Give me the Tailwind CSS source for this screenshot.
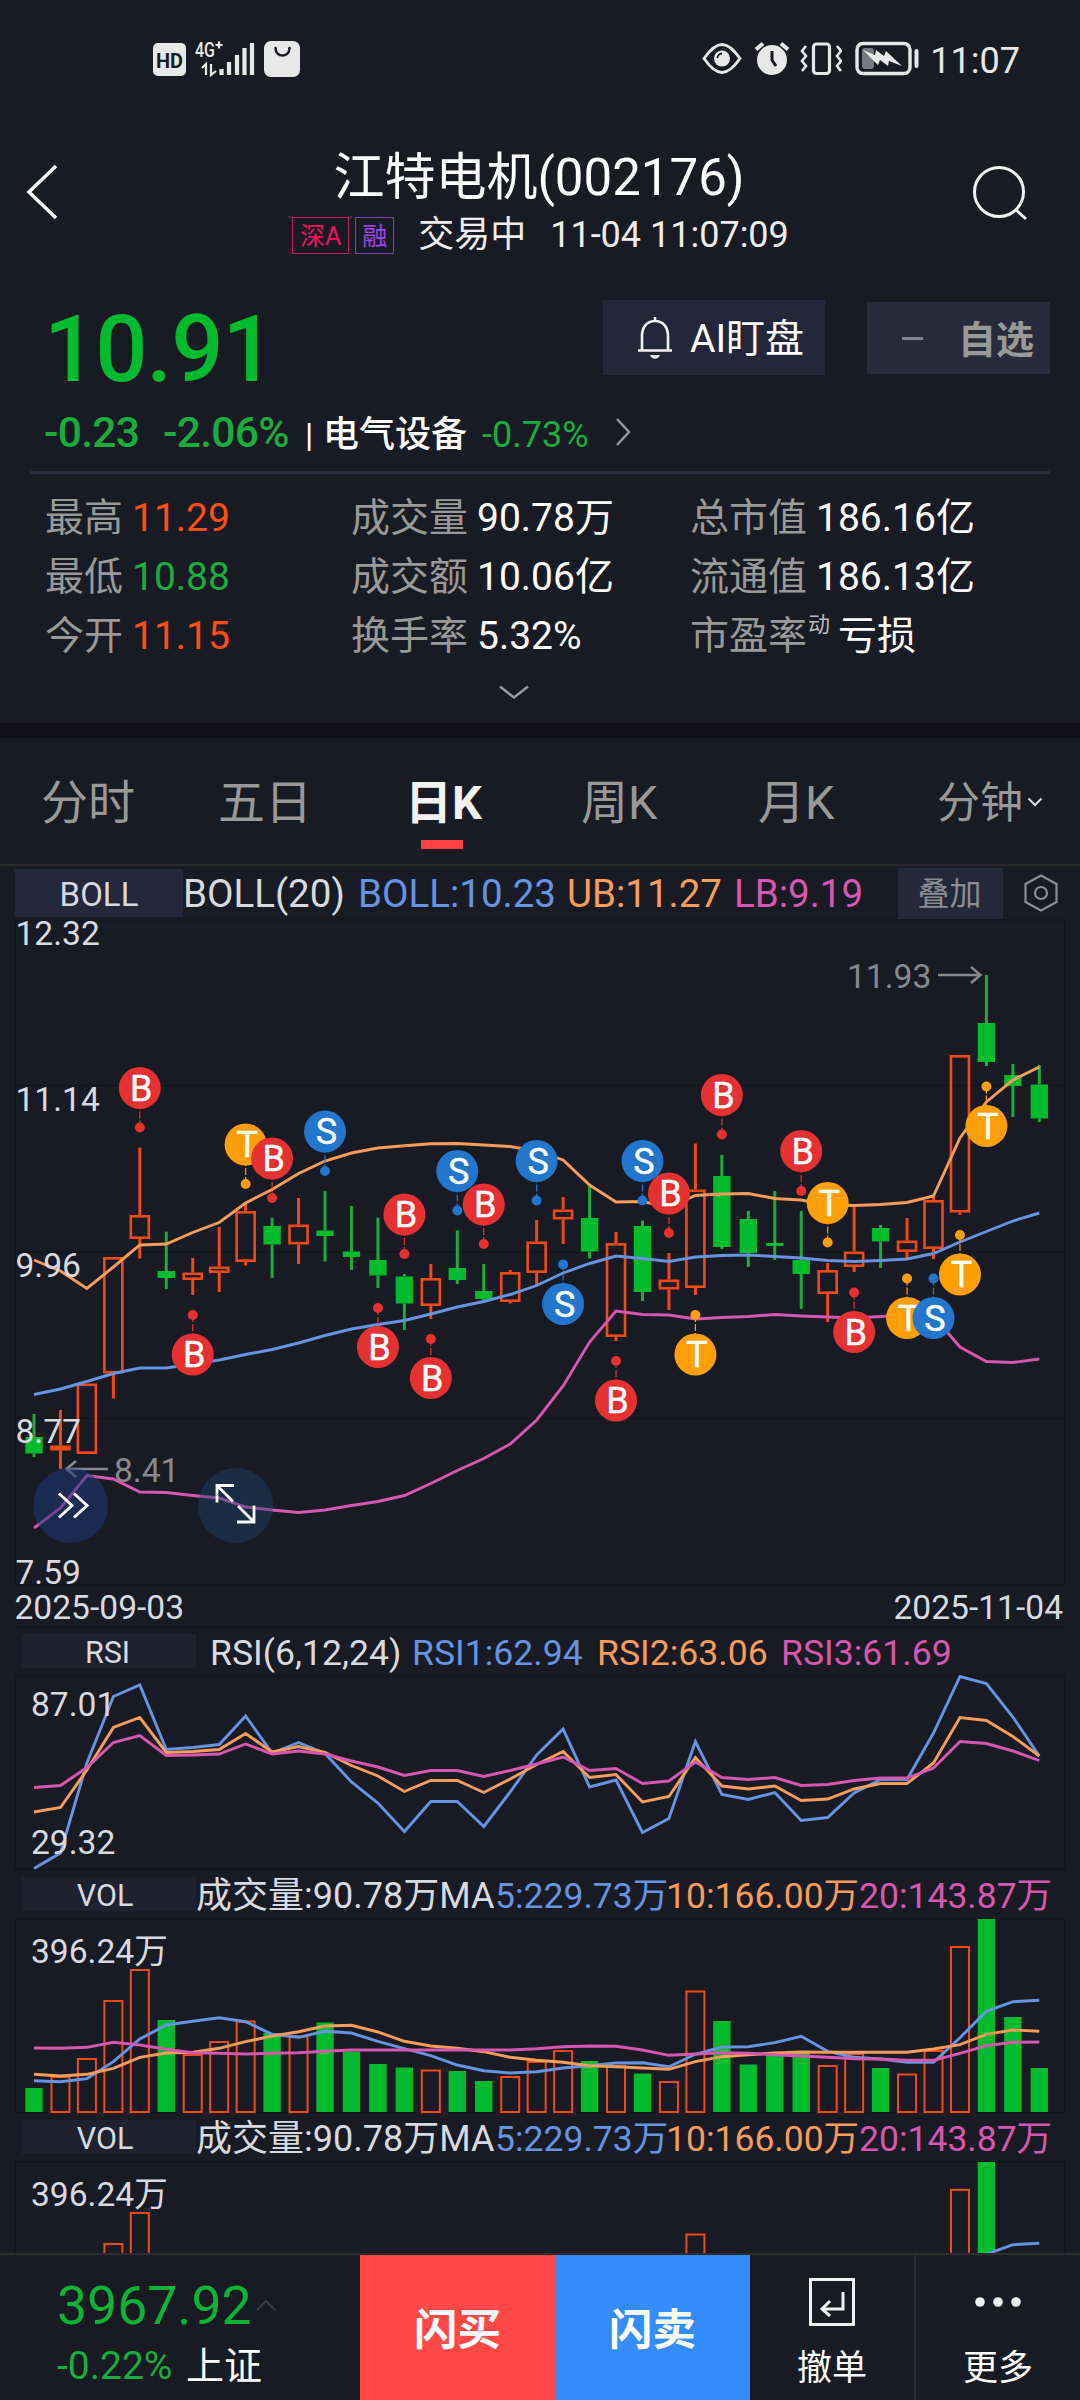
<!DOCTYPE html>
<html lang="zh-CN">
<head>
  <meta charset="UTF-8" />
  <meta name="viewport" content="width=device-width, initial-scale=1.0" />
  <title>江特电机(002176)</title>
  <script src="https://cdn.jsdelivr.net/npm/@tailwindcss/browser@4"></script>
</head>
<body class="bg-[#191b24]">
<div class="w-[1080px] h-[2400px] overflow-hidden flex flex-col bg-[#191b24] text-white whitespace-nowrap font-['Roboto','Noto_Sans_CJK_SC',sans-serif]">

  <!-- 状态栏 -->
  <div class="h-[120px] shrink-0 flex items-center justify-between pl-[153px] pr-[60px] text-[#e8e8e8]">
    <svg class="w-[148px] h-10 overflow-visible" viewBox="153 40 148 40" fill="currentColor">
      <rect x="153" y="43" width="33" height="33" rx="5" />
      <text x="169.500" y="67.500" font-size="21" font-weight="700" text-anchor="middle" textLength="27" lengthAdjust="spacingAndGlyphs" fill="#191b24">HD</text>
      <text x="195" y="57" font-size="20" font-weight="500" textLength="20" lengthAdjust="spacingAndGlyphs">4G</text>
      <path d="M215.500 45h7M219 41.500v7M206 75V64l-4 4M211 64v11l5-4" fill="none" stroke="currentColor" stroke-width="2.200" />
      <path d="M221.500 69v6M229 62v13M237 55v20M244.500 48v27M252 43v32" fill="none" stroke="currentColor" stroke-width="4.200" />
      <rect x="264" y="41" width="36" height="36" rx="7" />
      <path d="M275.500 48c0 10 14 10 14 0" fill="none" stroke="#191b24" stroke-width="2.500" stroke-linecap="round" />
    </svg>
    <div class="flex items-center">
      <svg class="w-[140px] h-10 mr-3" viewBox="703 40 140 40" fill="none" stroke="currentColor">
        <path d="M705 58.500c7-10 12-14 18-14s11 4 18 14c-7 10-12 14-18 14s-11-4-18-14z" stroke-width="3" />
        <circle cx="723" cy="58.500" r="8" fill="currentColor" stroke="none" />
        <path d="M718.500 58a4.500 4.500 0 0 1 4.500-4.500" stroke="#191b24" stroke-width="1.800" />
        <circle cx="773" cy="60" r="15" fill="currentColor" stroke="none" />
        <path d="M757 49.500l7-6M789 49.500l-7-6" stroke-width="4" />
        <path d="M773 51v9l4 6" stroke="#191b24" stroke-width="3" />
        <rect x="814.500" y="44" width="16" height="29.500" rx="3" stroke-width="3.200" />
        <path d="M807 46l-4 5 4 5-4 5 4 5-4 5M838 46l4 5-4 5 4 5-4 5 4 5" stroke-width="2.600" />
      </svg>
      <svg class="w-[66px] h-10 mr-2.5" viewBox="855 40 66 40" fill="none" stroke="currentColor">
        <rect x="858" y="43.500" width="53" height="30" rx="6" stroke-width="3.400" />
        <rect x="863" y="48" width="12" height="21" rx="3" fill="#777980" stroke="none" />
        <path d="M864 50l12 5 1-5 8 6 2-5 16 15-13-5-1 5-8-6-2 5z" fill="currentColor" stroke="none" />
        <path d="M917.500 51v15" stroke-width="4" stroke-linecap="round" />
      </svg>
      <span class="text-[36px] leading-none pt-px">11:07</span>
    </div>
  </div>

  <!-- 标题 -->
  <header class="h-[170px] shrink-0 flex justify-between">
    <svg class="w-[60px] h-16 mt-[40px] ml-[10px]" viewBox="10 160 60 64" fill="none" stroke="#fff" stroke-width="3.500">
      <path d="M56 166L29 192l27 26" />
    </svg>
    <div class="flex flex-col items-center pt-7 pl-[38px]">
      <h1 class="text-[51px] leading-[59px]">江特电机(002176)</h1>
      <div class="h-[42px] mt-[7px] ml-[3px] flex items-center text-[36px] text-[#eeeeee]">
        <span class="h-[37px] w-[57px] mr-1.5 border-[1.500px] border-[#c41a5e] text-[#f0105f] text-[25px] leading-[38px] text-center">深A</span>
        <span class="h-[37px] w-[39px] mr-[24px] border-[1.500px] border-[#7d46b8] text-[#a044f0] text-[25px] leading-[38px] text-center">融</span>
        <span class="mr-[24px]">交易中</span>
        <span>11-04 11:07:09</span>
      </div>
    </div>
    <svg class="w-[70px] h-[70px] mt-[37px] mr-[40px]" viewBox="970 157 70 70" fill="none" stroke="#f0f0f0" stroke-width="3">
      <circle cx="999" cy="192" r="24.500" /><path d="M1016 210l10 9" />
    </svg>
  </header>

  <!-- 报价 -->
  <section class="h-[433px] shrink-0 pl-[30px] pr-[30px]">
    <div class="h-[115px] flex">
      <div class="w-[573px] pl-[14px] pt-[10px] text-[92px] leading-[100px] tracking-[-1px] font-medium text-[#00bb2d]">10.91</div>
      <button class="w-[222px] h-[75px] mt-2.5 flex items-center pl-[34px] bg-[#242739] text-[39px]">
        <svg class="w-[36px] h-[44px] mr-[17px]" viewBox="636 315 36 44" fill="none" stroke="#f2f2f2" stroke-width="2.600">
          <path d="M641 349v-14c0-9 5-15 13-15s13 6 13 15v14M637 349.500h34M654 320v-4" /><path d="M649 354c2 5 8 5 10 0z" fill="#f2f2f2" stroke="none" />
        </svg>
        <span class="pt-1">AI盯盘</span>
      </button>
      <button class="w-[183px] h-[72px] mt-3 ml-auto flex items-center pl-[35px] bg-[#2a2b3a] text-[#999] text-[38px] font-bold">
        <span class="w-[21px] h-[3px] mr-[35px] bg-[#7c8499]"></span><span class="pt-1">自选</span>
      </button>
    </div>
    <div class="h-[54px] flex items-baseline pl-[14px] leading-[55px] text-[#18ad3c]">
      <span class="w-[119px] text-[42.500px] tracking-[-0.7px] font-medium">-0.23</span>
      <span class="w-[142px] text-[42.500px] tracking-[-0.7px] font-medium">-2.06%</span>
      <span class="w-[18px] text-[34px] text-white">|</span>
      <span class="w-[159px] text-[36px] font-medium text-white">电气设备</span>
      <span class="w-[131px] text-[36px]">-0.73%</span>
      <svg class="w-5 h-[30px] self-center" viewBox="0 0 20 30" fill="none" stroke="#999" stroke-width="2.500"><path d="M4 2l12 13L4 28" /></svg>
    </div>
    <div class="h-[3px] mt-3 bg-[#2a2b3b]"></div>
    <div class="mt-3.5 grid grid-cols-[306px_339px_1fr] auto-rows-[59px] pl-[15px] text-[39px] leading-[60px]">
      <div class="flex"><span class="w-[87px] text-[#999]">最高</span><span class="text-[#ff4d14]">11.29</span></div>
      <div class="flex"><span class="w-[126px] text-[#999]">成交量</span><span>90.78万</span></div>
      <div class="flex"><span class="w-[126px] text-[#999]">总市值</span><span>186.16亿</span></div>
      <div class="flex"><span class="w-[87px] text-[#999]">最低</span><span class="text-[#18ad3c]">10.88</span></div>
      <div class="flex"><span class="w-[126px] text-[#999]">成交额</span><span>10.06亿</span></div>
      <div class="flex"><span class="w-[126px] text-[#999]">流通值</span><span>186.13亿</span></div>
      <div class="flex"><span class="w-[87px] text-[#999]">今开</span><span class="text-[#ff4d14]">11.15</span></div>
      <div class="flex"><span class="w-[126px] text-[#999]">换手率</span><span>5.32%</span></div>
      <div class="flex"><span class="w-[118px] text-[#999]">市盈率</span><span class="w-[30px] text-[22px] leading-[38px] text-[#bbb]">动</span><span>亏损</span></div>
    </div>
    <svg class="w-[34px] h-[18px] mt-[18px] ml-[467px]" viewBox="0 0 34 18" fill="none" stroke="#999" stroke-width="2.500"><path d="M3 3.500L17 14.500l14-11" /></svg>
  </section>

  <div class="h-[15px] shrink-0 bg-[#111016]"></div>

  <!-- 周期 tabs -->
  <nav class="h-[128px] shrink-0 flex pl-[41px] pt-[32px] border-b-2 border-[#2a2a2c] text-[47px] leading-[66px] text-[#999]">
    <span class="w-[177px]">分时</span>
    <span class="w-[187px]">五日</span>
    <div class="w-[176px] flex flex-col font-bold text-[#f2f2f2]">
      <span>日K</span>
      <span class="w-[42px] h-[9px] mt-1 ml-4 bg-[#ff4040]"></span>
    </div>
    <span class="w-[177px]">周K</span>
    <span class="w-[179px]">月K</span>
    <div class="flex items-start text-[43px]">分钟
      <svg class="w-4 h-3 mt-[26px] ml-1" viewBox="0 0 16 12" fill="none" stroke="#ddd" stroke-width="2"><path d="M1.500 2.500L8 9l6.500-6.500" /></svg>
    </div>
  </nav>

  <!-- BOLL 指标栏 -->
  <div class="h-[54px] shrink-0 flex items-center pl-[15px] text-[38.500px] leading-[54px]">
    <span class="w-[168px] h-12 bg-[#25283a] text-center text-[33px] leading-[51px] text-[#d8dae2]">BOLL</span>
    <span class="w-[175px] pt-0.5 text-[#d8dae2]">BOLL(20)</span>
    <span class="w-[209px] pt-0.5 text-[#6693e2]">BOLL:10.23</span>
    <span class="w-[167px] pt-0.5 text-[#f89c5c]">UB:11.27</span>
    <span class="w-[164px] pt-0.5 text-[#d657b0]">LB:9.19</span>
    <span class="w-[105px] h-[51px] pr-0.5 bg-[#25283a] text-center text-[32px] leading-[52px] text-[#8b8d93]">叠加</span>
    <svg class="w-[38px] h-[40px] ml-[19px]" viewBox="0 0 38 40" fill="none" stroke="#8b8d93" stroke-width="2.200">
      <path d="M19 2.500L34.500 11v18L19 37.500 3.500 29V11z" /><circle cx="19" cy="20" r="6" />
    </svg>
  </div>

  <svg id="kline" class="w-[1080px] h-[707px] shrink-0 overflow-visible" viewBox="0 920 1080 707"></svg>

  <!-- RSI -->
  <div class="h-12 shrink-0 flex items-center pl-[22px] text-[35.600px] leading-[48px] text-[#d8dae2]">
    <span class="w-[174px] h-[34px] pr-[3px] bg-[#1f212f] text-center text-[30.500px] leading-[37px]">RSI</span>
    <span class="w-[202px] pl-[14px] pt-[3px]">RSI(6,12,24)</span>
    <span class="w-[185px] pl-[14px] pt-[3px] text-[#6693e2]">RSI1:62.94</span>
    <span class="w-[184px] pl-[14px] pt-[3px] text-[#f89c5c]">RSI2:63.06</span>
    <span class="pl-[14px] pt-[3px] text-[#d657b0]">RSI3:61.69</span>
  </div>
  <svg id="rsi" class="w-[1080px] h-[195px] shrink-0" viewBox="0 1675 1080 195"></svg>

  <!-- 成交量 -->
  <div class="h-12 shrink-0 flex items-center pl-[22px] text-[35.500px] leading-[48px] text-[#d8dae2]">
    <span class="w-[174px] h-[34px] pr-2 bg-[#1f212f] text-center text-[30.500px] leading-[37px]">VOL</span>
    <span class="w-[299px] pt-1 text-[36px]">成交量:90.78万MA</span>
    <span class="w-[171px] pt-1 text-[#6693e2]">5:229.73万</span>
    <span class="w-[193px] pt-1 text-[#f89c5c]">10:166.00万</span>
    <span class="pt-1 text-[#d657b0]">20:143.87万</span>
  </div>
  <svg id="vol1" class="w-[1080px] h-[195px] shrink-0" viewBox="0 1918 1080 195"></svg>
  <div class="h-12 shrink-0 flex items-center pl-[22px] text-[35.500px] leading-[48px] text-[#d8dae2]">
    <span class="w-[174px] h-[34px] pr-2 bg-[#1f212f] text-center text-[30.500px] leading-[37px]">VOL</span>
    <span class="w-[299px] pt-1 text-[36px]">成交量:90.78万MA</span>
    <span class="w-[171px] pt-1 text-[#6693e2]">5:229.73万</span>
    <span class="w-[193px] pt-1 text-[#f89c5c]">10:166.00万</span>
    <span class="pt-1 text-[#d657b0]">20:143.87万</span>
  </div>
  <svg id="vol2" class="w-[1080px] h-[92px] shrink-0" viewBox="0 1918 1080 92"></svg>

  <!-- 底部操作栏 -->
  <footer class="h-[147px] shrink-0 flex border-t-2 border-[#2d2d2f]">
    <div class="w-[360px] pl-[57px] pt-[18px]">
      <div class="flex text-[53.500px] leading-[66px] text-[#0db334]">3967.92
        <svg class="w-[22px] h-3 mt-[26px] ml-[3px]" viewBox="0 0 22 12" fill="none" stroke="#3a3b40" stroke-width="2"><path d="M2 11l9-9 9 9" /></svg>
      </div>
      <div class="flex mt-[5px] text-[39px] leading-[44px] text-[#18ad3c]"><span class="w-[129px]">-0.22%</span><span class="text-[38px] text-white">上证</span></div>
    </div>
    <button class="w-[195px] pt-1.5 bg-[#ff4848] text-[43.500px] font-bold">闪买</button>
    <button class="w-[195px] pt-1.5 bg-[#358cff] text-[43.500px] font-bold">闪卖</button>
    <button class="w-[164px] flex flex-col items-center pt-[22px] text-[35px] leading-[44px]">
      <svg class="w-[48px] h-[50px] mb-[20px]" viewBox="0 0 48 50" fill="none" stroke="#f0f0f0" stroke-width="3"><path d="M2.500 2.500h43v45h-43zM35 15v17H16M22 24l-8 8 8 7" /></svg>
      撤单
    </button>
    <button class="w-[166px] flex flex-col items-center pt-[22px] border-l-2 border-[#2d2d2f] text-[35px] leading-[44px]">
      <svg class="w-[48px] h-[50px] mb-[20px]" viewBox="0 0 48 50" fill="#f0f0f0"><circle cx="6" cy="25" r="4.800" /><circle cx="24" cy="25" r="4.800" /><circle cx="42" cy="25" r="4.800" /></svg>
      更多
    </button>
  </footer>
</div>

<script>
  const RED = '#f24a14', GREEN = '#00bb2d';
  const BLUE = '#6693e2', ORANGE = '#f89c5c', PINK = '#d657b0';
  const GRID = '#13141a', LABEL = '#d8dae2';
  const px = i => 34 + i * 26.456;

  // 类型, 最高, 实体上, 实体下, 最低
  const candles = [
    ['G',1414,1437,1453.5,1457],['R',1410,1445.5,1450.5,1469],['R',1383.5,1383.5,1454,1454],['R',1257,1257,1373.5,1398.5],
    ['R',1147.7,1215,1239,1258.5],['G',1231.7,1271,1278,1289],['R',1258,1272.5,1280,1295],['R',1227,1266.5,1273,1292],
    ['R',1203,1211,1262,1265.5],['G',1217.7,1226,1244.5,1278],['R',1198,1224.5,1244.5,1264],['G',1191,1230.5,1236,1261.5],
    ['G',1206,1251.5,1257,1270],['G',1217.7,1260,1275.5,1288],['G',1274,1276.5,1303.5,1330],['R',1264,1278,1306,1319],
    ['G',1230.5,1268,1280,1284],['G',1264,1291,1299,1301],['R',1270,1272,1302,1303.5],['R',1220,1241.5,1273,1285],
    ['R',1197,1209.5,1219.5,1244],['G',1184,1218,1251.5,1258.5],['R',1232,1243,1337,1341],['G',1220.5,1226,1292,1301],
    ['R',1253,1279.5,1289.5,1310],['R',1143.5,1189.5,1288,1295],['G',1155,1176,1247,1249],['G',1211,1219,1253,1267],
    ['G',1191,1243,1246,1260],['G',1211,1260,1274,1309],['R',1263,1270,1294,1322],['R',1207,1251.5,1267,1272],
    ['G',1225,1228,1241.5,1268],['R',1218,1240.5,1252,1258],['R',1197,1200,1249,1259],['R',1055,1055,1212.5,1215],
    ['G',975,1023,1062,1066],['G',1064,1075,1086,1117],['G',1065,1084.5,1118.5,1122]
  ];
  const ub = [1260,1271,1288.5,1267,1245,1244,1232.5,1222.5,1203,1189.5,1173.5,1161,1153,1148,1145.7,1143.8,1143.5,1145,1146.5,1151,1160,1185,1202,1201.5,1207,1195.5,1194,1193.5,1198.5,1200,1205,1205.5,1204.5,1202.5,1196,1138,1102,1080,1067];
  const mid = [1394.5,1389,1381.5,1373.5,1368,1368,1364,1360,1354.5,1349.5,1343,1335.5,1329,1324.5,1320.5,1314,1307,1301.5,1294.5,1285.5,1273,1263.5,1256,1258.5,1261.5,1257,1255.5,1255,1256.5,1258,1260.5,1261.5,1260.5,1259,1253.5,1242,1231.5,1221,1213];
  const lb = [1528,1508,1475.5,1479,1492,1492.5,1495.5,1498,1507,1510,1512.5,1510,1505.5,1501.5,1495.5,1483.5,1470.5,1458.5,1444,1420,1386,1342,1311,1314.5,1315,1319,1317.5,1316.5,1314.5,1316,1317,1318,1316.5,1315,1316,1347,1361.5,1362.5,1359];
  // 序号, 标记, 圆心, 小点
  const marks = [
    [4,'B',1088,1127.5],[6,'B',1354.5,1315],[8,'T',1144.5,1184],[9,'B',1158.5,1198],[11,'S',1131.5,1171],[13,'B',1347,1308],
    [14,'B',1214.5,1254],[15,'B',1378,1339],[16,'S',1171,1210.5],[17,'B',1204.5,1244],[19,'S',1161,1200.5],[20,'S',1304,1264.5],
    [22,'B',1400.5,1361],[23,'S',1161,1200.5],[24,'B',1193.5,1233],[25,'T',1354.5,1315],[26,'B',1095,1134.5],[29,'B',1151,1191],
    [30,'T',1203,1242.5],[31,'B',1332,1292.5],[33,'T',1318,1278.5],[34,'S',1318,1278.5],[35,'T',1274.5,1235],[36,'T',1126,1086.5]
  ];
  const markColor = { B: '#e53131', S: '#2277cc', T: '#ff9f05' };

  const rsi1 = [1868.5,1853,1763,1696.5,1685,1749.5,1747.5,1744.5,1716,1753,1742.5,1753.5,1782,1803,1831.5,1801.5,1801.5,1826.5,1792,1755,1729,1787,1780,1832.5,1818.5,1741.5,1794.5,1799.5,1792.5,1820.5,1817.5,1793,1779.5,1779.5,1733,1676.5,1683.5,1717,1756];
  const rsi2 = [1812,1807.5,1770,1727.5,1717.5,1752.5,1751.5,1749.5,1733.5,1752,1746.5,1752.5,1765.5,1776,1791.5,1780.5,1780.5,1792.5,1779,1764.5,1751.5,1777.5,1774.5,1802,1796.5,1757.5,1786,1789,1786,1800.5,1799,1789,1783.5,1783.5,1763,1717.5,1720.5,1736.5,1756];
  const rsi3 = [1787.5,1785.5,1767.5,1742.5,1735.5,1755.5,1755,1754,1744,1754,1751,1754,1761,1767,1775.5,1770.5,1770.5,1776.5,1770.5,1764,1757,1770.5,1768.5,1783.5,1781,1762,1777.5,1779.5,1777.5,1785.5,1784.5,1780.5,1778,1778,1768,1741.5,1743.5,1751,1760.5];

  const volTop = [2088,2076,2058,2000,1969,2020,2054,2041,2020.5,2033,2035.5,2022.5,2051.5,2064,2067.5,2069.5,2071,2081,2076,2061,2050,2061,2065,2073.5,2081,1990.5,2021,2064.5,2054,2051.5,2065,2053,2068,2073.5,2050,1946,1919,2017,2068];
  const v = a => a.map(n => 1870 + n / 3);
  const ma5 = v([632,635,626,575,507,465,454,443,455,493,502,484,489,514,536,557,585,602,609,605,594,587,579,578,590,553,531,530,518,499,544,562,567,577,577,503,424,395,391]);
  const ma10 = v([613,618,613,595,562,549,547,535,515,498,485,468,466,486,514,528,535,545,562,571,577,587,590,594,598,575,560,554,549,546,547,547,547,547,537,524,493,480,484]);
  const ma20 = v([534,535,532,517,525,538,548,550,552,550,548,544,540,540,540,540,540,540,540,536,530,528,529,540,556,552,548,550,554,558,562,566,567,571,571,550,527,517,516]);

  const line = (ys, color) => `<polyline fill="none" stroke="${color}" stroke-width="2.9" points="${ys.map((y, i) => px(i).toFixed(1) + ',' + y.toFixed(1)).join(' ')}" />`;
  const seg = (x1, y1, x2, y2, color, w) => `<line x1="${x1}" y1="${y1}" x2="${x2}" y2="${y2}" stroke="${color}" stroke-width="${w}" />`;
  const label = (x, y, t, color = LABEL, anchor = 'start') => `<text x="${x}" y="${y}" font-size="33.6" fill="${color}" text-anchor="${anchor}">${t}</text>`;
  const frame = (y1, y2) => seg(15.5, y1, 15.5, y2, GRID, 1) + seg(1064.5, y1, 1064.5, y2, GRID, 1);

  function body(i, type, top, bottom, w) {
    const x = px(i);
    if (type === 'G') return `<rect x="${x - 8.7}" y="${top}" width="17.4" height="${bottom - top}" fill="${GREEN}" />`;
    return `<rect x="${x - 9}" y="${top + w / 2}" width="18" height="${Math.max(bottom - top - w, 1)}" fill="none" stroke="${RED}" stroke-width="${w}" />`;
  }

  function drawKline() {
    let s = frame(920, 1585);
    [920, 1085.5, 1252, 1418.5, 1585, 1627].forEach(y => s += seg(15, y, 1065, y, GRID, 1.2));
    candles.forEach(([t, hi, top, bot, lo], i) => {
      const c = t === 'G' ? '#18ad3c' : RED;
      if (hi < top) s += seg(px(i), hi, px(i), top, c, 3);
      if (lo > bot) s += seg(px(i), bot, px(i), lo, c, 3);
      s += body(i, t, top, bot, 2.6);
    });
    s += line(ub, ORANGE) + line(mid, BLUE) + line(lb, PINK);
    marks.forEach(([i, t, cy, dy]) => {
      const x = px(i), c = markColor[t];
      s += `<line x1="${x}" y1="${dy}" x2="${x}" y2="${cy}" stroke="${c}" stroke-width="1.2" stroke-dasharray="7 2" />`;
      s += `<circle cx="${x}" cy="${dy}" r="5" fill="${c}" /><circle cx="${x}" cy="${cy}" r="21" fill="${c}" />`;
      s += `<text x="${x + 1.5}" y="${cy + 12.8}" font-size="36" text-anchor="middle" fill="#fff" stroke="#fff" stroke-width=".4">${t}</text>`;
    });
    s += label(15.5, 945, '12.32') + label(15.5, 1110.7, '11.14') + label(15.5, 1276.5, '9.96') + label(15.5, 1442.5, '8.77') + label(15.5, 1583.5, '7.59');
    s += label(14.5, 1619, '2025-09-03') + label(1063, 1619, '2025-11-04', LABEL, 'end');
    s += label(847, 988, '11.93', '#87898f') + label(114, 1482, '8.41', '#87898f');
    s += `<path d="M938 975h42M971 967l9.500 8-9.500 8M108 1469H67M76 1461l-9.500 8 9.500 8" fill="none" stroke="#87898f" stroke-width="2.5" />`;
    s += `<circle cx="70.600" cy="1505.500" r="37.500" fill="#1a3a78" fill-opacity=".52" /><path d="M59 1493.500l13 12-13 12M74 1493.500l13 12-13 12" fill="none" stroke="#fff" stroke-width="3" />`;
    s += `<circle cx="235.600" cy="1505.500" r="37.500" fill="#1d4670" fill-opacity=".42" /><path d="M234 1485.500h-17v17M217.500 1486l15.500 15.500M237 1522h17v-16.500M253.500 1521.500l-15.500-15.500" fill="none" stroke="#fff" stroke-width="2.8" />`;
    document.getElementById('kline').innerHTML = s;
  }

  function drawRsi() {
    document.getElementById('rsi').innerHTML = frame(1675, 1870) + seg(15, 1675, 1065, 1675, GRID, 1.5) + seg(15, 1869.5, 1065, 1869.5, GRID, 1.5)
      + line(rsi1, BLUE) + line(rsi2, ORANGE) + line(rsi3, PINK) + label(31, 1716, '87.01') + label(31, 1854, '29.32');
  }

  function drawVol(id) {
    let s = frame(1918, 2113) + seg(15, 1918.5, 1065, 1918.5, GRID, 1.5) + seg(15, 2113, 1065, 2113, GRID, 1.5);
    volTop.forEach((y, i) => s += body(i, candles[i][0], y, candles[i][0] === 'G' ? 2112 : 2113, 2));
    s += line(ma5, BLUE) + line(ma10, ORANGE) + line(ma20, PINK) + label(31, 1962.7, '396.24万');
    document.getElementById(id).innerHTML = s;
  }

  drawKline();
  drawRsi();
  drawVol('vol1');
  drawVol('vol2');
</script>
</body>
</html>
